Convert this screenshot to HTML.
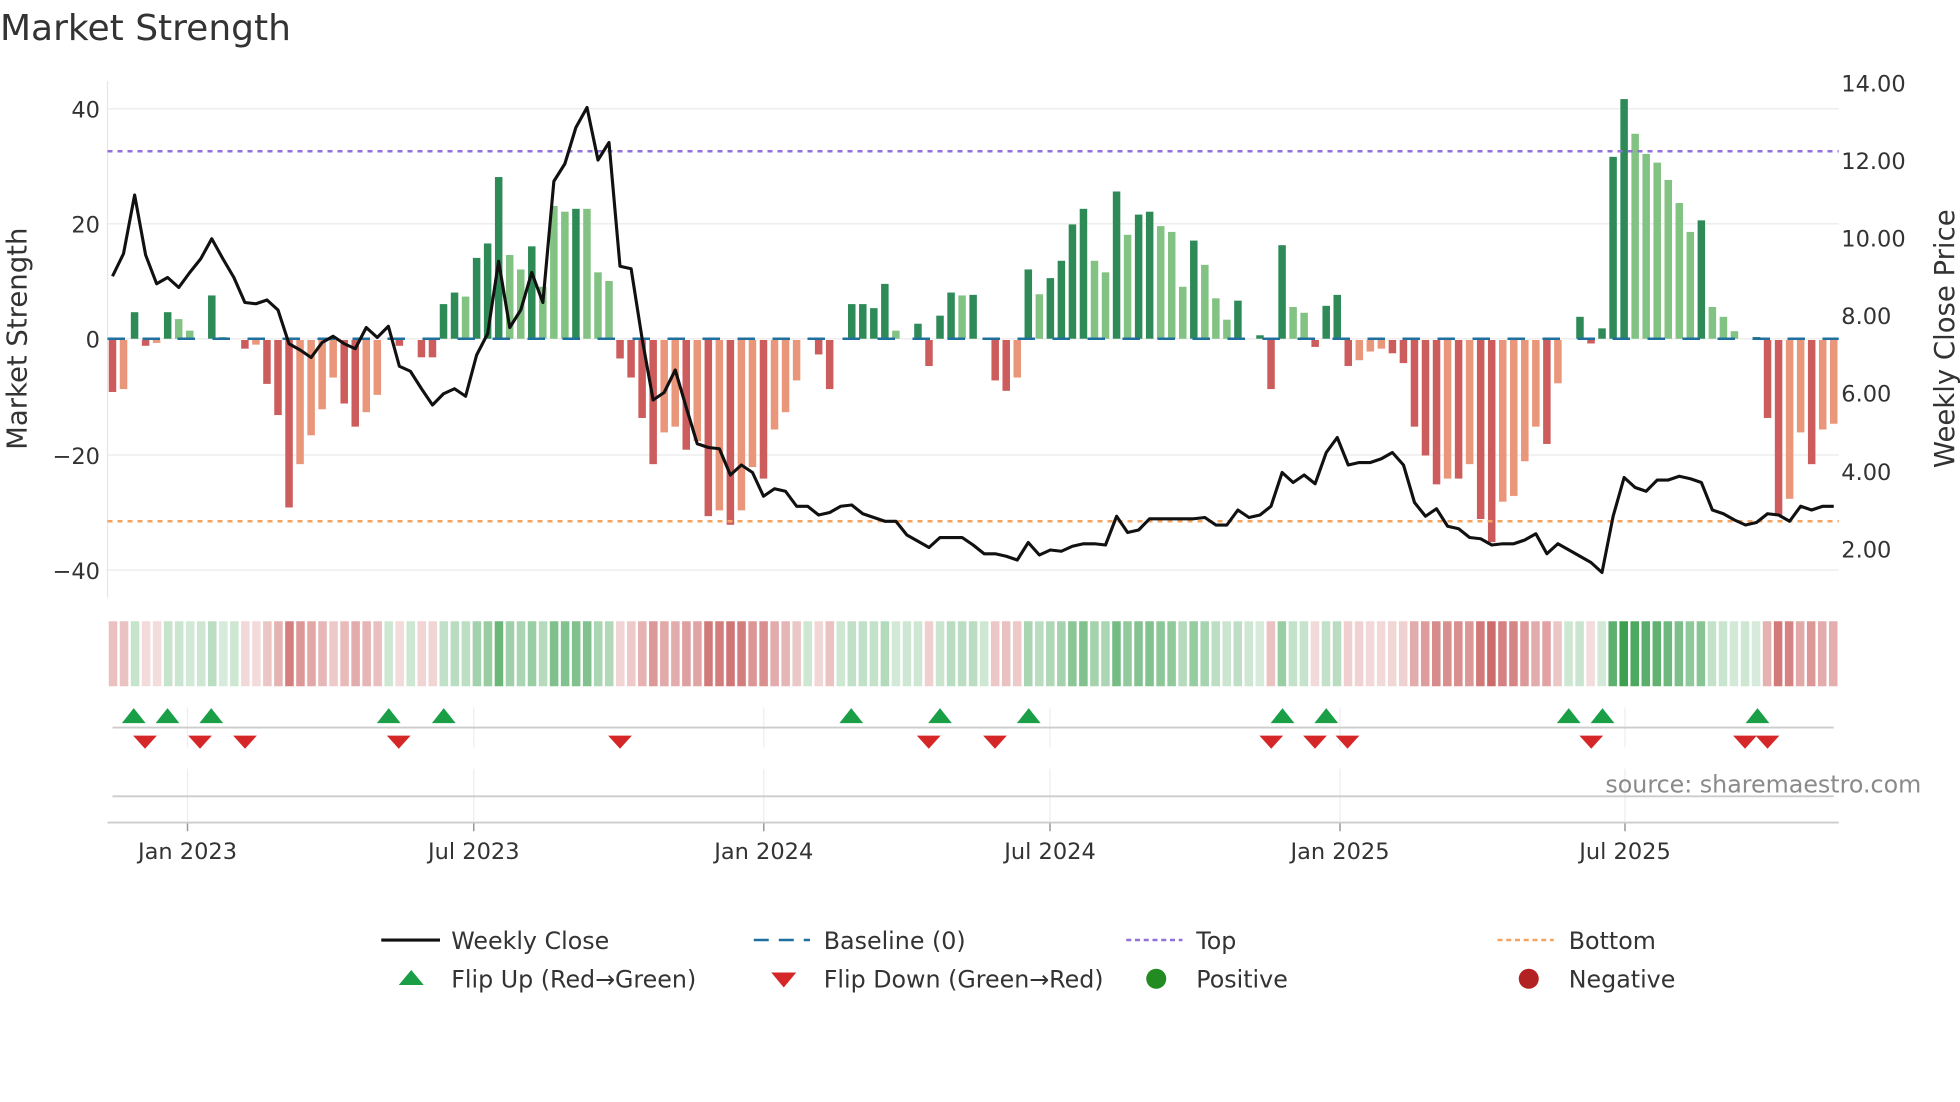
<!DOCTYPE html>
<html><head><meta charset="utf-8"><style>
html,body{margin:0;padding:0;background:#fff;width:1960px;height:1102px;overflow:hidden}
svg{display:block}
text{font-family:"DejaVu Sans","Liberation Sans",sans-serif;fill:#333}
</style></head><body>
<svg id="s" width="1960" height="1102" viewBox="0 0 1568 881.6" xmlns="http://www.w3.org/2000/svg">
<text x="0" y="32" font-size="28.8">Market Strength</text>
<g id="grid"></g>
<text x="80" y="94" font-size="18" text-anchor="end">40</text>
<text x="80" y="186" font-size="18" text-anchor="end">20</text>
<text x="80" y="278" font-size="18" text-anchor="end">0</text>
<text x="80" y="371" font-size="18" text-anchor="end">−20</text>
<text x="80" y="463" font-size="18" text-anchor="end">−40</text>
<text x="1473" y="73" font-size="18">14.00</text>
<text x="1473" y="135" font-size="18">12.00</text>
<text x="1473" y="197" font-size="18">10.00</text>
<text x="1473" y="259" font-size="18">8.00</text>
<text x="1473" y="321" font-size="18">6.00</text>
<text x="1473" y="384" font-size="18">4.00</text>
<text x="1473" y="446" font-size="18">2.00</text>
<text transform="translate(21,271) rotate(-90)" font-size="22" text-anchor="middle">Market Strength</text>
<text transform="translate(1563,271) rotate(-90)" font-size="22" text-anchor="middle">Weekly Close Price</text>
<g id="bars"></g>
<line x1="86" y1="121" x2="1471" y2="121" stroke="#9370db" stroke-width="2" stroke-dasharray="4,4"/>
<line x1="86" y1="417" x2="1471" y2="417" stroke="#f4a460" stroke-width="2" stroke-dasharray="4,4"/>
<line x1="86" y1="271" x2="1471" y2="271" stroke="#1f6f9f" stroke-width="2" stroke-dasharray="14,14"/>
<polyline id="price" fill="none" stroke="#111" stroke-width="2.5" stroke-linejoin="round"/>
<g id="heat"></g>
<line x1="90" y1="582" x2="1467" y2="582" stroke="#ccc" stroke-width="1.5"/>
<line x1="90" y1="637" x2="1467" y2="637" stroke="#ccc" stroke-width="1.5"/>
<line x1="86" y1="658" x2="1471" y2="658" stroke="#ccc" stroke-width="1.5"/>
<g id="marks"></g>
<text x="1537" y="634" font-size="19" text-anchor="end" style="fill:#8a8a8a">source: sharemaestro.com</text>
<g font-size="18">
<text x="150" y="687" text-anchor="middle">Jan 2023</text>
<text x="379" y="687" text-anchor="middle">Jul 2023</text>
<text x="611" y="687" text-anchor="middle">Jan 2024</text>
<text x="840" y="687" text-anchor="middle">Jul 2024</text>
<text x="1072" y="687" text-anchor="middle">Jan 2025</text>
<text x="1300" y="687" text-anchor="middle">Jul 2025</text>
</g>
<g font-size="19">
<line x1="305" y1="752" x2="352" y2="752" stroke="#111" stroke-width="2.5"/>
<text x="361" y="759">Weekly Close</text>
<line x1="603" y1="752" x2="648" y2="752" stroke="#1f6f9f" stroke-width="2" stroke-dasharray="12,8"/>
<text x="659" y="759">Baseline (0)</text>
<line x1="901" y1="752" x2="946" y2="752" stroke="#9370db" stroke-width="2" stroke-dasharray="4,3"/>
<text x="957" y="759">Top</text>
<line x1="1198" y1="752" x2="1243" y2="752" stroke="#f4a460" stroke-width="2" stroke-dasharray="4,3"/>
<text x="1255" y="759">Bottom</text>
<polygon points="319,788 329,776 339,788" fill="#1a9e46"/>
<text x="361" y="790">Flip Up (Red→Green)</text>
<polygon points="617,778 637,778 627,790" fill="#d62728"/>
<text x="659" y="790">Flip Down (Green→Red)</text>
<circle cx="925" cy="783" r="8" fill="#228b22"/>
<text x="957" y="790">Positive</text>
<circle cx="1223" cy="783" r="8" fill="#b22222"/>
<text x="1255" y="790">Negative</text>
</g>
</svg>
<script>
var NS="http://www.w3.org/2000/svg";
function el(p,t,a){var e=document.createElementNS(NS,t);for(var k in a)e.setAttribute(k,a[k]);document.getElementById(p).appendChild(e);return e;}
[87,179,271,364,456].forEach(function(y){el("grid","line",{x1:86,x2:1471,y1:y,y2:y,stroke:"#eeeeee","stroke-width":1.2});});
el("grid","line",{x1:86,x2:86,y1:65,y2:478,stroke:"#e6e6e6","stroke-width":1});
[150,379,611,840,1072,1300].forEach(function(x){el("grid","line",{x1:x,x2:x,y1:566,y2:598,stroke:"#eee","stroke-width":1});el("grid","line",{x1:x,x2:x,y1:615,y2:658,stroke:"#eee","stroke-width":1});el("grid","line",{x1:x,x2:x,y1:658,y2:665,stroke:"#999","stroke-width":1.2});});
var v=[[-9,1],[-8.5,0],[4.6,1],[-1,1],[-0.5,0],[4.6,1],[3.4,0],[1.4,0],[0,0],[7.5,1],[0.3,0],[0,0],[-1.5,1],[-0.8,0],[-7.6,1],[-13,1],[-29,1],[-21.5,0],[-16.5,0],[-12,0],[-6.5,0],[-11,1],[-15,1],[-12.5,0],[-9.5,0],[0,0],[-1,1],[0,0],[-3,1],[-3,1],[6,1],[8,1],[7.3,0],[14,1],[16.5,1],[28,1],[14.5,0],[12,0],[16,1],[9,0],[23,0],[22,0],[22.5,1],[22.5,0],[11.5,0],[10,0],[-3.2,1],[-6.5,1],[-13.5,1],[-21.5,1],[-16,0],[-15,0],[-19,1],[-17.5,0],[-30.5,1],[-29.5,0],[-32,1],[-29.5,0],[-22,0],[-24,1],[-15.5,0],[-12.5,0],[-7,0],[0,0],[-2.5,1],[-8.5,1],[0,0],[6,1],[6,1],[5.3,1],[9.5,1],[1.4,0],[0,0],[2.6,1],[-4.5,1],[4,1],[8,1],[7.5,0],[7.6,1],[0,0],[-7,1],[-8.8,1],[-6.5,0],
[12,1],[7.7,0],[10.5,1],[13.5,1],[19.8,1],[22.5,1],[13.5,0],[11.5,0],[25.5,1],[18,0],[21.5,1],[22,1],[19.5,0],[18.5,0],[9,0],[17,1],[12.8,0],[7,0],[3.3,0],[6.6,1],[0,0],[0.6,1],[-8.5,1],[16.2,1],[5.5,0],[4.5,0],[-1.2,1],[5.7,1],[7.6,1],[-4.5,1],[-3.5,0],[-2,0],[-1.5,0],[-2.3,1],[-4,1],[-15,1],[-20,1],[-25,1],[-24,0],[-24,1],[-21.5,0],[-31,1],[-35,1],[-28,0],[-27,0],[-21,0],[-15,0],[-18,1],[-7.5,0],[0,0],[3.8,1],[-0.6,1],[1.8,1],[31.5,1],[41.5,1],[35.5,0],[32,0],[30.5,0],[27.5,0],[23.5,0],[18.5,0],[20.5,1],[5.5,0],[3.8,0],[1.3,0],[0,0],[0.3,1],[-13.5,1],[-30.5,1],[-27.5,0],[-16,0],[-21.5,1],[-15.5,0],[-14.5,0]];
var n=v.length,st=1377/(n-1),hw=(1471-86)/n;
v.forEach(function(d,i){var x=90+i*st,val=d[0],h=Math.abs(val)*4.62;
 if(h>0.3){var c=val>0?(d[1]?"#2e8b57":"#82c282"):(d[1]?"#cd5c5c":"#e9967a");
 el("bars","rect",{x:x-3,y:val>0?271-h:272,width:6,height:h,fill:c});}
 var a=Math.min(1,0.2+Math.abs(val)/40*0.8);
 var hc=val>=0?"rgba(60,160,80,"+(val===0?0.25:a)+")":"rgba(200,90,90,"+a+")";
 el("heat","rect",{x:86+i*hw+1,y:497,width:hw-2,height:52,fill:hc});
});
var p=[221,203,156,204,227,222,230,218,207,191,207,222,242,243,240,248,275,280,286,274,269,275,279,262,270,261,293,297,311,324,315,311,317,284,267,209,262,248,218,242,145,131,102,86,128,114,213,215,271,320,314,296,326,355,358,359,380,372,378,397,391,393,405,405,412,410,405,404,411,414,417,417,428,433,438,430,430,430,436,443,443,445,448,434,444,440,441,437,435,435,436,413,426,424,415,415,415,415,415,414,420,420,408,414,412,405,378,386,380,387,362,350,372,370,370,367,362,372,402,413,407,421,423,430,431,436,435,435,432,427,443,435,440,445,450,458,413,382,390,393,384,384,381,383,386,408,411,416,420,418,411,412,417,405,408,405,405];
var ps=1377/(p.length-1);
document.getElementById("price").setAttribute("points",p.map(function(y,i){return (90+i*ps).toFixed(1)+","+y;}).join(" "));
[107,134,169,311,355,681,752,823,1026,1061,1255,1282,1406].forEach(function(x){el("marks","polygon",{points:(x-9.5)+",578.5 "+x+",566.5 "+(x+9.5)+",578.5",fill:"#1a9e46"});});
[116,160,196,319,496,743,796,1017,1052,1078,1273,1396,1414].forEach(function(x){el("marks","polygon",{points:(x-9.5)+",588.5 "+(x+9.5)+",588.5 "+x+",599",fill:"#d62728"});});
</script>
</body></html>
